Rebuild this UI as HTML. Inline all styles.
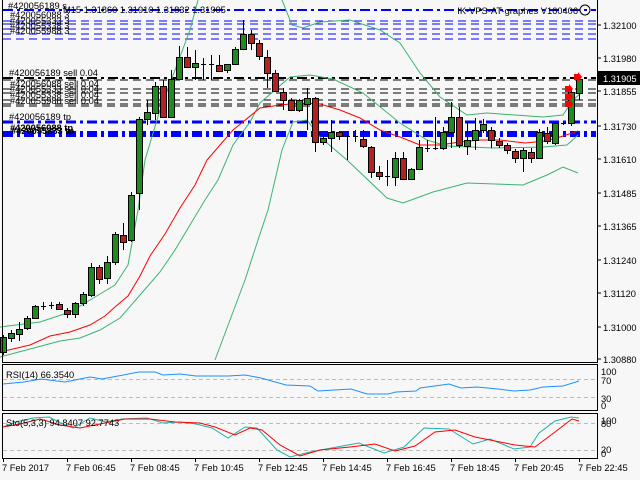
<!DOCTYPE html>
<html><head><meta charset="utf-8"><style>
html,body{margin:0;padding:0;background:#f7f7f7;}
svg{display:block;font-family:"Liberation Sans",sans-serif;}
</style></head><body>
<svg width="640" height="480" viewBox="0 0 640 480" xmlns="http://www.w3.org/2000/svg">
<rect width="640" height="480" fill="#f7f7f7"/>
<g shape-rendering="crispEdges">
<line x1="3" y1="10" x2="596" y2="10" stroke="#0000ff" stroke-width="2" stroke-dasharray="10,4,3,4"/>
<g stroke="#0000ff" stroke-width="1" stroke-dasharray="8,5">
<line x1="3" y1="21" x2="596" y2="21"/><line x1="3" y1="24" x2="596" y2="24"/>
<line x1="3" y1="29" x2="596" y2="29"/><line x1="3" y1="34" x2="596" y2="34"/>
<line x1="3" y1="39" x2="596" y2="39"/>
</g>
<line x1="3" y1="78" x2="596" y2="78" stroke="#000" stroke-width="2" stroke-dasharray="10,4,3,4"/>
<g stroke="#000" stroke-width="1" stroke-dasharray="8,5">
<line x1="3" y1="80" x2="596" y2="80"/><line x1="3" y1="89" x2="596" y2="89"/>
<line x1="3" y1="93" x2="596" y2="93"/><line x1="3" y1="100" x2="596" y2="100"/>
<line x1="3" y1="104" x2="596" y2="104"/><line x1="3" y1="106" x2="596" y2="106"/>
</g>
<line x1="3" y1="122" x2="596" y2="122" stroke="#0000ff" stroke-width="3" stroke-dasharray="10,4,3,4"/>
<line x1="3" y1="134" x2="596" y2="134" stroke="#0000ff" stroke-width="6" stroke-dasharray="10,4,3,4"/>
</g>
<g fill="none" stroke-width="1">
<polyline stroke="#3cb371" points="0,327 40,322 70,312 95,297 115,285 128,265 138,210 145,160 160,110 175,70 190,30 198,0"/>
<polyline stroke="#3cb371" points="282,0 292,25 303,28 320,22 350,20 380,30 400,43 420,73 440,97 467,115 487,113 543,117 563,115 573,100 582,92"/>
<polyline stroke="#3cb371" points="0,357 30,349 60,341 80,338 100,330 120,318 140,295 160,272 175,250 190,225 205,200 218,180 233,145 250,122 260,103 290,77 310,75 333,79 363,93 400,123 427,140 447,146 493,148 543,147 567,145 578,135"/>
<polyline stroke="#3cb371" points="215,360 230,320 245,280 258,240 268,210 282,150 293,122 307,120 320,137 347,160 387,198 403,203 433,192 467,183 523,185 547,175 563,167 578,173"/>
<polyline stroke="#ff0000" points="0,352 30,345 50,336 70,332 90,325 105,316 115,307 128,296 140,276 150,256 165,234 180,208 195,185 207,160 233,130 260,108 280,105 300,103 320,104 340,110 360,118 380,130 400,137 420,145 440,145 460,142 480,140 500,140 525,143 545,141 560,137 578,131"/>
</g>
<g shape-rendering="crispEdges" stroke="#000" stroke-width="1">
<path fill="none" d="M3.5 335V355 M11.5 330V342 M19.5 322V341 M27.5 316V330 M35.5 305V318 M43.5 302V310 M51.5 302V309 M59.5 302V309 M67.5 308V318 M75.5 302V318 M83.5 292V306 M91.5 263V297 M99.5 265V284 M107.5 256V284 M115.5 232V265 M123.5 223V250 M131.5 192V242 M139.5 117V210 M147.5 100V125 M155.5 82V120 M163.5 80V117 M171.5 70V117 M179.5 46V80 M187.5 47V68 M195.5 50V80 M203.5 58V80 M211.5 55V80 M219.5 55V72 M227.5 64V73 M235.5 47V65 M243.5 20V50 M251.5 30V50 M259.5 40V60 M267.5 50V88 M275.5 70V92 M283.5 88V110 M291.5 98V110 M299.5 99V112 M307.5 88V130 M315.5 97V152 M323.5 137V145 M331.5 120V152 M339.5 131V140 M347.5 131V160 M355.5 130V142 M363.5 130V148 M371.5 146V178 M379.5 166V180 M387.5 160V186 M395.5 152V186 M403.5 152V180 M411.5 168V180 M419.5 140V170 M427.5 140V152 M435.5 117V150 M443.5 127V150 M451.5 102V148 M459.5 107V148 M467.5 122V155 M475.5 118V150 M483.5 119V133 M491.5 127V148 M499.5 138V148 M507.5 143V154 M515.5 149V163 M523.5 148V172 M531.5 148V163 M539.5 129V158 M547.5 127V144 M555.5 122V145 M563.5 122V125 M571.5 90V126 M579.5 75V100 M41 306.5H46 M49 305.5H54 M201 64.5H206 M209 64.5H214 M345 136.5H350 M353 136.5H358 M385 176.5H390 M425 148.5H430 M433 148.5H438 M561 123.5H566"/>
<g fill="#1f8b1f">
<rect x="0.5" y="337.5" width="6" height="15"/><rect x="8.5" y="333.5" width="6" height="5"/><rect x="16.5" y="329.5" width="6" height="5"/><rect x="24.5" y="318.5" width="6" height="10"/><rect x="32.5" y="306.5" width="6" height="12"/><rect x="72.5" y="303.5" width="6" height="11"/><rect x="80.5" y="294.5" width="6" height="9"/><rect x="88.5" y="267.5" width="6" height="28"/><rect x="104.5" y="262.5" width="6" height="16"/><rect x="112.5" y="234.5" width="6" height="28"/><rect x="128.5" y="195.5" width="6" height="45"/><rect x="136.5" y="119.5" width="6" height="74"/><rect x="144.5" y="112.5" width="6" height="7"/><rect x="152.5" y="86.5" width="6" height="27"/><rect x="168.5" y="79.5" width="6" height="38"/><rect x="176.5" y="57.5" width="6" height="22"/><rect x="192.5" y="63.5" width="6" height="4"/><rect x="224.5" y="64.5" width="6" height="6"/><rect x="232.5" y="49.5" width="6" height="15"/><rect x="240.5" y="34.5" width="6" height="15"/><rect x="296.5" y="100.5" width="6" height="10"/><rect x="304.5" y="98.5" width="6" height="6"/><rect x="320.5" y="138.5" width="6" height="4"/><rect x="328.5" y="132.5" width="6" height="6"/><rect x="392.5" y="158.5" width="6" height="19"/><rect x="408.5" y="169.5" width="6" height="10"/><rect x="416.5" y="147.5" width="6" height="22"/><rect x="440.5" y="132.5" width="6" height="16"/><rect x="448.5" y="117.5" width="6" height="15"/><rect x="464.5" y="140.5" width="6" height="6"/><rect x="472.5" y="130.5" width="6" height="10"/><rect x="480.5" y="124.5" width="6" height="6"/><rect x="520.5" y="150.5" width="6" height="8"/><rect x="536.5" y="132.5" width="6" height="26"/><rect x="552.5" y="123.5" width="6" height="20"/><rect x="568.5" y="92.5" width="6" height="31"/><rect x="576.5" y="79.5" width="6" height="14"/>
</g>
<g fill="#b22222">
<rect x="56.5" y="304.5" width="6" height="5"/><rect x="64.5" y="310.5" width="6" height="4"/><rect x="96.5" y="267.5" width="6" height="12"/><rect x="120.5" y="235.5" width="6" height="7"/><rect x="160.5" y="86.5" width="6" height="31"/><rect x="184.5" y="57.5" width="6" height="10"/><rect x="216.5" y="65.5" width="6" height="6"/><rect x="248.5" y="34.5" width="6" height="9"/><rect x="256.5" y="43.5" width="6" height="13"/><rect x="264.5" y="57.5" width="6" height="16"/><rect x="272.5" y="73.5" width="6" height="18"/><rect x="280.5" y="92.5" width="6" height="8"/><rect x="288.5" y="100.5" width="6" height="10"/><rect x="312.5" y="98.5" width="6" height="44"/><rect x="336.5" y="132.5" width="6" height="4"/><rect x="360.5" y="139.5" width="6" height="7"/><rect x="368.5" y="147.5" width="6" height="25"/><rect x="376.5" y="172.5" width="6" height="4"/><rect x="400.5" y="158.5" width="6" height="21"/><rect x="456.5" y="117.5" width="6" height="28"/><rect x="488.5" y="130.5" width="6" height="10"/><rect x="496.5" y="141.5" width="6" height="4"/><rect x="504.5" y="145.5" width="6" height="5"/><rect x="512.5" y="151.5" width="6" height="7"/><rect x="528.5" y="152.5" width="6" height="6"/><rect x="544.5" y="133.5" width="6" height="8"/>
</g>
</g>
<g fill="#ff0000">
<polygon points="574,74 578,74 578,72 582,77 578,82 578,80 574,80"/>
<polygon points="565,86 569,86 569,84 573,89 569,94 569,92 565,92"/>
<polygon points="565,94 569,94 569,92 573,97 569,102 569,100 565,100"/>
<polygon points="565,101 569,101 569,99 573,104 569,109 569,107 565,107"/>
</g>
<g font-size="9.3" fill="#000">
<text x="8" y="9">#420056189 s</text>
<text x="63" y="13">M15  1.31860  1.31910  1.31832  1.31905</text>
<text x="10" y="18">#420056088 3</text><text x="10" y="24">#420055333 3</text><text x="10" y="29">#420055338 3</text><text x="10" y="34">#420055988 3</text>
<text x="9" y="76">#420056189 sell 0.04</text>
<text x="10" y="87">#420056088 sell 0.04</text><text x="10" y="92">#420055333 sell 0.04</text><text x="10" y="98">#420055338 sell 0.04</text><text x="10" y="104">#420055988 sell 0.04</text>
<text x="9" y="120">#420056189 tp</text>
<text x="10" y="131" font-weight="bold">#420056088 tp</text><text x="11" y="134" font-weight="bold">#420055333 tp</text>
<text x="578" y="14" text-anchor="end">IK-VPS-AT-graphes V160406</text>
</g>
<circle cx="585" cy="10" r="5" fill="none" stroke="#000"/>
<g fill="none" stroke="#000" shape-rendering="crispEdges">
<line x1="2.5" y1="0" x2="2.5" y2="362"/>
<line x1="597.5" y1="0" x2="597.5" y2="362"/>
<line x1="2" y1="362.5" x2="598" y2="362.5"/>
<rect x="2.5" y="364.5" width="595" height="46"/>
<rect x="2.5" y="413.5" width="595" height="45"/>
</g>
<g font-size="9.3" fill="#000">
<text x="603" y="29">1.32100</text><text x="603" y="62">1.31980</text>
<rect x="598" y="71" width="42" height="14" fill="#000"/><text x="603" y="82" fill="#fff">1.31905</text>
<text x="603" y="95">1.31855</text><text x="603" y="130">1.31730</text><text x="603" y="163">1.31610</text>
<text x="603" y="197">1.31485</text><text x="603" y="230">1.31365</text><text x="603" y="264">1.31240</text>
<text x="603" y="297">1.31120</text><text x="603" y="331">1.31000</text><text x="603" y="363">1.30880</text>
<text x="601" y="375">100</text><text x="601" y="384">70</text><text x="601" y="402">30</text><text x="601" y="409">0</text>
<text x="601" y="424">100</text><text x="601" y="427">80</text><text x="601" y="453">20</text><text x="601" y="457">0</text>
</g>
<g stroke="#000" shape-rendering="crispEdges">
<line x1="598" y1="25" x2="601" y2="25"/><line x1="598" y1="58" x2="601" y2="58"/><line x1="598" y1="91" x2="601" y2="91"/><line x1="598" y1="126" x2="601" y2="126"/><line x1="598" y1="159" x2="601" y2="159"/><line x1="598" y1="193" x2="601" y2="193"/><line x1="598" y1="226" x2="601" y2="226"/><line x1="598" y1="260" x2="601" y2="260"/><line x1="598" y1="293" x2="601" y2="293"/><line x1="598" y1="327" x2="601" y2="327"/><line x1="598" y1="359" x2="601" y2="359"/>
</g>
<g stroke="#bbb" stroke-dasharray="4,3" shape-rendering="crispEdges">
<line x1="3" y1="379.5" x2="597" y2="379.5"/><line x1="3" y1="397.5" x2="597" y2="397.5"/>
<line x1="3" y1="423.5" x2="597" y2="423.5"/><line x1="3" y1="450.5" x2="597" y2="450.5"/>
</g>
<polyline fill="none" stroke="#1e90ff" points="3,384 24,382 41,379 65,382 90,377 102,379 118,376 139,372 155,372 163,375 180,374 196,376 228,376 245,375 261,378 286,385 310,386 318,391 351,389 367,394 388,394 396,392 416,391 420,388 449,384 461,388 477,387 498,389 514,391 530,390 543,387 563,386 579,381"/>
<text x="6" y="378" font-size="9.3">RSI(14) 66.3540</text>
<polyline fill="none" stroke="#20b2aa" points="3,427 16,422 33,418 49,417 61,423 73,428 90,418 106,422 122,419 147,418 163,423 180,422 196,424 212,428 228,438 245,427 257,428 277,450 290,457 310,452 326,449 359,443 384,453 404,447 424,428 449,429 473,444 490,439 514,449 530,447 539,433 555,421 571,417 579,418"/>
<polyline fill="none" stroke="#ff0000" points="3,427 20,424 40,419 60,425 80,428 100,424 125,419 150,419 175,422 200,423 215,427 235,435 250,428 262,430 280,445 300,456 320,450 350,447 375,444 395,451 415,446 435,432 455,430 475,437 495,441 515,445 535,447 555,432 572,419 579,421"/>
<text x="6" y="426" font-size="9.3">Sto(5,3,3) 94.8407 92.7743</text>
<g stroke="#000" shape-rendering="crispEdges">
<line x1="3.5" y1="459" x2="3.5" y2="462"/><line x1="67.5" y1="459" x2="67.5" y2="462"/><line x1="131.5" y1="459" x2="131.5" y2="462"/><line x1="195.5" y1="459" x2="195.5" y2="462"/><line x1="259.5" y1="459" x2="259.5" y2="462"/><line x1="323.5" y1="459" x2="323.5" y2="462"/><line x1="387.5" y1="459" x2="387.5" y2="462"/><line x1="451.5" y1="459" x2="451.5" y2="462"/><line x1="515.5" y1="459" x2="515.5" y2="462"/><line x1="579.5" y1="459" x2="579.5" y2="462"/>
</g>
<g font-size="9.3" fill="#000">
<text x="2" y="471">7 Feb 2017</text><text x="66" y="471">7 Feb 06:45</text><text x="130" y="471">7 Feb 08:45</text><text x="194" y="471">7 Feb 10:45</text><text x="258" y="471">7 Feb 12:45</text><text x="322" y="471">7 Feb 14:45</text><text x="386" y="471">7 Feb 16:45</text><text x="450" y="471">7 Feb 18:45</text><text x="514" y="471">7 Feb 20:45</text><text x="578" y="471">7 Feb 22:45</text>
</g>
</svg>
</body></html>
